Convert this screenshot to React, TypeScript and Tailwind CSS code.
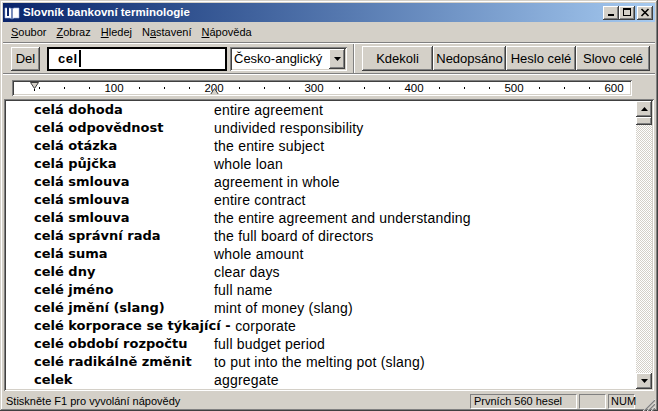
import React from 'react';

const raised =
  'shadow-[inset_-1px_-1px_#404040,inset_1px_1px_#ffffff,inset_-2px_-2px_#808080,inset_2px_2px_#d4d0c8]';
const sunken =
  'shadow-[inset_1px_1px_#808080,inset_-1px_-1px_#ffffff,inset_2px_2px_#404040,inset_-2px_-2px_#d4d0c8]';

const rows: [string, string][] = [
  ['celá dohoda', 'entire agreement'],
  ['celá odpovědnost', 'undivided responsibility'],
  ['celá otázka', 'the entire subject'],
  ['celá půjčka', 'whole loan'],
  ['celá smlouva', 'agreement in whole'],
  ['celá smlouva', 'entire contract'],
  ['celá smlouva', 'the entire agreement and understanding'],
  ['celá správní rada', 'the full board of directors'],
  ['celá suma', 'whole amount'],
  ['celé dny', 'clear days'],
  ['celé jméno', 'full name'],
  ['celé jmění (slang)', 'mint of money (slang)'],
  ['celé korporace se týkající -', 'corporate'],
  ['celé období rozpočtu', 'full budget period'],
  ['celé radikálně změnit', 'to put into the melting pot (slang)'],
  ['celek', 'aggregate'],
];

const menu: [string, string][] = [
  ['S', 'oubor'],
  ['Z', 'obraz'],
  ['H', 'ledej'],
  ['N', 'astavení'],
  ['N', 'ápověda'],
];

function Triangle({ up }: { up?: boolean }) {
  return (
    <svg width="7" height="4" viewBox="0 0 7 4">
      <path d={up ? 'M3.5 0L7 4H0z' : 'M0 0h7L3.5 4z'} fill="#000" />
    </svg>
  );
}

function BookIcon() {
  return (
    <svg width="16" height="16" viewBox="0 0 16 16">
      <path d="M1 3h5l2 1v10l-2-1H1z" fill="#fff" stroke="#9db4e0" strokeWidth="0.6" />
      <path d="M15 3h-5l-2 1v10l2-1h5z" fill="#fff" stroke="#9db4e0" strokeWidth="0.6" />
      <path d="M3 2h2v9H3z" fill="#0a246a" />
      <path d="M7.5 4h1v10h-1z" fill="#1c3a84" />
    </svg>
  );
}

function CaptionButton({ kind }: { kind: 'min' | 'max' | 'close' }) {
  return (
    <div className={`w-[16px] h-[14px] bg-[#d4d0c8] flex items-center justify-center ${raised}`}>
      <svg width="10" height="9" viewBox="0 0 10 9">
        {kind === 'min' && <path d="M2 6h6v2H2z" fill="#000" />}
        {kind === 'max' && <path d="M1 0h8v8H1zM2 2v5h6V2z" fill="#000" fillRule="evenodd" />}
        {kind === 'close' && (
          <path d="M1.5 1l7 7M8.5 1l-7 7" stroke="#000" strokeWidth="1.6" />
        )}
      </svg>
    </div>
  );
}

function Ruler() {
  const ticks: number[] = [];
  for (let v = 25; v < 620; v += 25) if (v % 100 !== 0) ticks.push(v);
  return (
    <svg width="616" height="12" className="block">
      {ticks.map((v) => (
        <rect key={v} x={v} y={5} width={1} height={2} fill="#000" />
      ))}
      {[100, 200, 300, 400, 500, 600].map((v) => (
        <text
          key={v}
          x={v}
          y={10}
          textAnchor="middle"
          fontSize="11.5"
          fontFamily="'Liberation Sans', Arial, sans-serif"
          fill="#000"
        >
          {v}
        </text>
      ))}
      <path d="M16.5 0.5h8l-4 6z" fill="#d4d0c8" stroke="#404040" />
      <rect x={20} y={7} width={1} height={2} fill="#000" />
      <path d="M196.5 12.5h8l-4-6z" fill="#d4d0c8" stroke="#404040" />
    </svg>
  );
}

export default function App() {
  return (
    <div
      className={`w-[658px] h-[411px] bg-[#d4d0c8] p-[3px] flex flex-col overflow-hidden font-['Liberation_Sans',Arial,sans-serif] text-black shadow-[inset_-1px_-1px_#404040,inset_1px_1px_#d4d0c8,inset_-2px_-2px_#808080,inset_2px_2px_#ffffff]`}
    >
      {/* title */}
      <div className="h-[19px] shrink-0 flex items-center bg-linear-to-r from-[#0a246a] to-[#a6caf0] pl-[1px] pr-[2px]">
        <BookIcon />
        <span className="ml-[3px] text-white font-bold text-[11.5px] leading-none">
          Slovník bankovní terminologie
        </span>
        <div className="ml-auto flex items-center">
          <CaptionButton kind="min" />
          <CaptionButton kind="max" />
          <div className="w-[2px]" />
          <CaptionButton kind="close" />
        </div>
      </div>

      {/* menu */}
      <div className="h-[20px] shrink-0 flex items-center pl-[3px] text-[11px]">
        {menu.map(([k, rest], i) => (
          <span key={i} className="px-[5px]">
            {i === 3 ? (
              <>
                N<span className="underline">a</span>stavení
              </>
            ) : (
              <>
                <span className="underline">{k}</span>
                {rest}
              </>
            )}
          </span>
        ))}
      </div>
      <div className="h-[2px] shrink-0 border-t border-t-[#808080] border-b border-b-white" />

      {/* toolbar */}
      <div className="h-[29px] shrink-0 flex">
        <div className="w-[351px] flex items-center pl-[8px] border-r border-r-[#808080]">
          <div className={`w-[29px] h-[24px] flex items-center justify-center text-[13px] ${raised}`}>
            Del
          </div>
          <div className="ml-[7px] w-[180px] h-[24px] bg-white border-2 border-black flex items-center pl-[9px]">
            <span className="font-bold text-[13px] tracking-[0.5px]">cel</span>
            <span className="ml-[1px] w-[2px] h-[17px] bg-black" />
          </div>
          <div className={`ml-[3px] w-[117px] h-[24px] bg-white flex items-center pl-[4px] pr-[2px] ${sunken}`}>
            <span className="text-[13px] flex-1">Česko-anglický</span>
            <div className={`w-[16px] h-[20px] bg-[#d4d0c8] flex items-center justify-center ${raised}`}>
              <Triangle />
            </div>
          </div>
        </div>
        <div className="flex-1 flex items-center pl-[7px] border-l border-l-white">
          {[
            ['Kdekoli', 'w-[71px]'],
            ['Nedopsáno', 'w-[73px]'],
            ['Heslo celé', 'w-[70px]'],
            ['Slovo celé', 'w-[74px]'],
          ].map(([t, w]) => (
            <div key={t} className={`${w} h-[25px] flex items-center justify-center text-[13px] ${raised}`}>
              {t}
            </div>
          ))}
        </div>
      </div>
      <div className="h-[2px] shrink-0 border-t border-t-[#808080] border-b border-b-white" />

      {/* ruler */}
      <div className="h-[24px] shrink-0 pl-[9px] pt-[5px]">
        <div className={`w-[620px] h-[16px] bg-white pl-[2px] pt-[2px] ${sunken}`}>
          <Ruler />
        </div>
      </div>

      {/* list */}
      <div className={`flex-1 mx-[1px] bg-white p-[2px] flex ${sunken}`}>
        <div className="flex-1 overflow-hidden pl-[28px]">
          {rows.map(([term, tr], i) => (
            <div key={i} className="h-[18px] flex items-center whitespace-pre">
              <span className="min-w-[180px] font-bold text-[13px] font-['DejaVu_Sans',sans-serif]">
                {term + ' '}
              </span>
              <span className="text-[14px] tracking-[0.2px]">{tr}</span>
            </div>
          ))}
        </div>
        <div className="w-[16px] flex flex-col">
          <div className={`h-[16px] bg-[#d4d0c8] flex items-center justify-center ${raised}`}>
            <Triangle up />
          </div>
          <div className={`h-[8px] bg-[#d4d0c8] ${raised}`} />
          <div className="flex-1 bg-[repeating-conic-gradient(#d4d0c8_0_25%,#ffffff_0_50%)] bg-[length:2px_2px]" />
          <div className={`h-[16px] bg-[#d4d0c8] flex items-center justify-center ${raised}`}>
            <Triangle />
          </div>
        </div>
      </div>

      {/* status bar */}
      <div className="h-[20px] shrink-0 flex items-center text-[11px]">
        <div className="flex-1 pl-[3px]">Stiskněte F1 pro vyvolání nápovědy</div>
        <div className="w-[107px] h-[15px] flex items-center pl-[3px] border border-t-[#808080] border-l-[#808080] border-b-white border-r-white">
          Prvních 560 hesel
        </div>
        <div className="ml-[2px] w-[27px] h-[15px] border border-t-[#808080] border-l-[#808080] border-b-white border-r-white" />
        <div className="ml-[2px] w-[27px] h-[15px] flex items-center pl-[2px] border border-t-[#808080] border-l-[#808080] border-b-white border-r-white">
          NUM
        </div>
        <div className="w-[20px] h-full flex items-end justify-end">
          <svg width="13" height="13" viewBox="0 0 13 13">
            {[0, 4, 8].map((o) => (
              <g key={o}>
                <path d={`M${o + 1} 13L13 ${o + 1}`} stroke="#ffffff" strokeWidth="1" />
                <path d={`M${o + 2} 13L13 ${o + 2}`} stroke="#808080" strokeWidth="1.4" />
              </g>
            ))}
          </svg>
        </div>
      </div>
    </div>
  );
}
